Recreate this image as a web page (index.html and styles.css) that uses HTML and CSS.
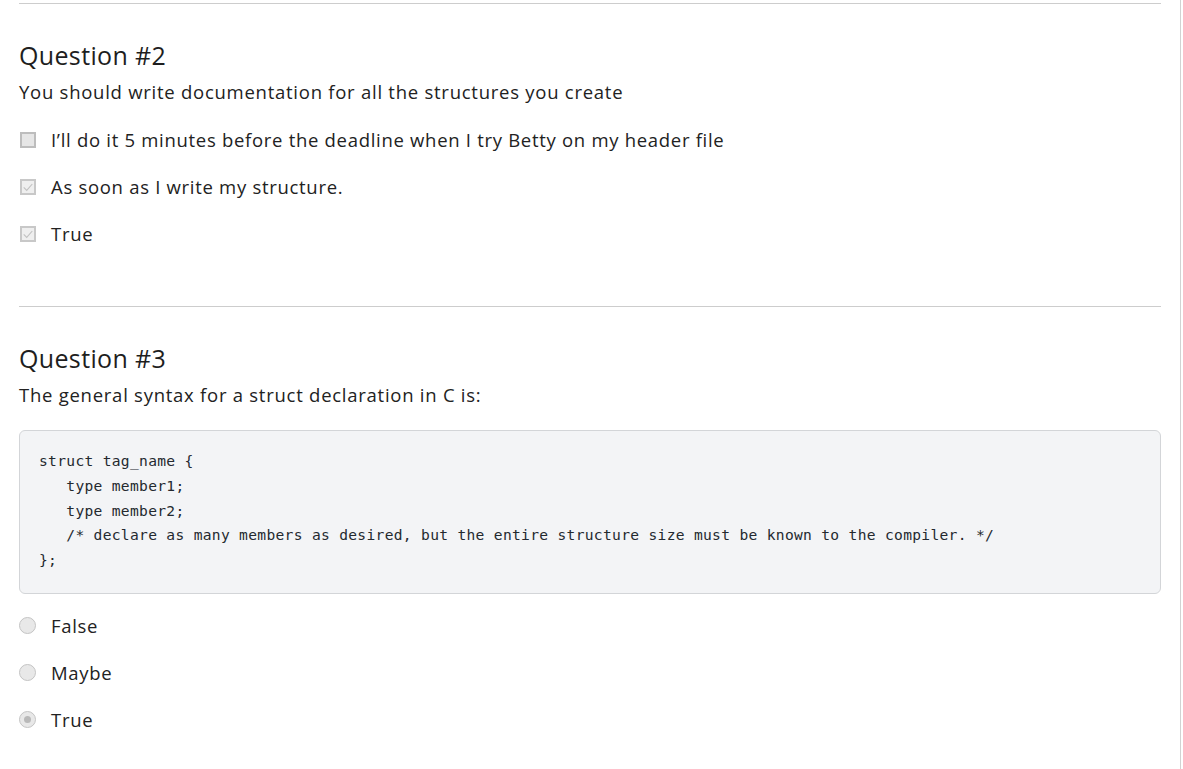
FILE: index.html
```html
<!DOCTYPE html>
<html lang="en">
<head>
<meta charset="utf-8">
<title>Quiz</title>
<link rel="stylesheet" href="styles.css">
</head>
<body>
<div class="page">
  <hr class="divider first">
  <section class="question">
    <h2 class="q-title">Question #2</h2>
    <p class="q-text">You should write documentation for all the structures you create</p>
    <ul class="options">
      <li class="option"><span class="check"></span><span class="label">I’ll do it 5 minutes before the deadline when I try Betty on my header file</span></li>
      <li class="option"><span class="check checked"><svg viewBox="0 0 14 14" width="14" height="14"><polyline points="2,7.5 5.5,11 12,3.5" fill="none" stroke="#c2c2c2" stroke-width="1.3"/></svg></span><span class="label">As soon as I write my structure.</span></li>
      <li class="option"><span class="check checked"><svg viewBox="0 0 14 14" width="14" height="14"><polyline points="2,7.5 5.5,11 12,3.5" fill="none" stroke="#c2c2c2" stroke-width="1.3"/></svg></span><span class="label">True</span></li>
    </ul>
  </section>
  <hr class="divider">
  <section class="question">
    <h2 class="q-title">Question #3</h2>
    <p class="q-text">The general syntax for a struct declaration in C is:</p>
    <pre class="code">struct tag_name {
   type member1;
   type member2;
   /* declare as many members as desired, but the entire structure size must be known to the compiler. */
};</pre>
    <ul class="options radios">
      <li class="option"><span class="radio"></span><span class="label">False</span></li>
      <li class="option"><span class="radio"></span><span class="label">Maybe</span></li>
      <li class="option"><span class="radio selected"></span><span class="label">True</span></li>
    </ul>
  </section>
</div>
</body>
</html>
```
FILE: styles.css
```css
html, body {
  margin: 0;
  padding: 0;
  background: #ffffff;
}

body {
  font-family: "Open Sans", "Noto Sans", Arial, sans-serif;
  color: #222222;
}

.page {
  width: 1181px;
  min-height: 769px;
  box-sizing: border-box;
  padding: 3px 19px 0 19px;
  border-right: 1px solid #d2d2d2;
}

.divider {
  margin: 0;
  border: 0;
  border-top: 1px solid #cdcdcd;
  height: 0;
}

.question {
  padding-top: 36px;
  padding-bottom: 59px;
}

.q-title {
  margin: 0;
  font-size: 25px;
  line-height: 30px;
  font-weight: 400;
  letter-spacing: 0.35px;
  color: #1e1e1e;
}

.q-text {
  margin: 9px 0 0 0;
  font-size: 18.5px;
  line-height: 26px;
  letter-spacing: 0.74px;
  color: #222222;
}

.options {
  list-style: none;
  margin: 22px 0 0 0;
  padding: 0;
  display: flex;
  flex-direction: column;
  gap: 21px;
}

.options.radios {
  margin-top: 19px;
}

.option {
  display: flex;
  align-items: center;
  gap: 15px;
  height: 26px;
}

.label {
  font-size: 18.5px;
  line-height: 26px;
  letter-spacing: 0.7px;
  color: #222222;
}

.check {
  width: 16px;
  height: 16px;
  box-sizing: border-box;
  margin-left: 1px;
  border: 2px solid #bdbdbd;
  background: #e6e6e6;
  display: flex;
  align-items: center;
  justify-content: center;
  flex: none;
}

.check.checked {
  background: #efefef;
  border-color: #c8c8c8;
}

.check svg {
  display: block;
  width: 12px;
  height: 12px;
}

.radio {
  width: 17px;
  height: 17px;
  box-sizing: border-box;
  border: 1.5px solid #c4c4c4;
  border-radius: 50%;
  background: #e8e8e8;
  flex: none;
  display: flex;
  align-items: center;
  justify-content: center;
}

.radio.selected::after {
  content: "";
  width: 7px;
  height: 7px;
  border-radius: 50%;
  background: #b9b9b9;
}

.code {
  margin: 22px 0 0 0;
  padding: 18px 19px 20px 19px;
  background: #f3f4f6;
  border: 1px solid #d3d5d8;
  border-radius: 6px;
  font-family: "DejaVu Sans Mono", "Liberation Mono", monospace;
  font-size: 14.6px;
  letter-spacing: 0.31px;
  line-height: 24.75px;
  color: #24292f;
  white-space: pre;
  overflow: hidden;
}
```
